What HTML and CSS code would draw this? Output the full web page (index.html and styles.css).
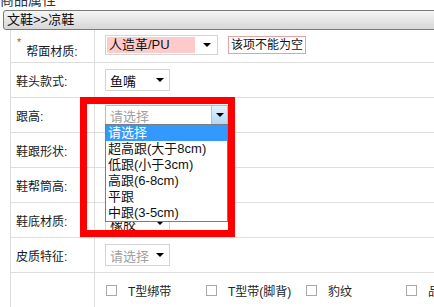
FILE: index.html
```html
<!DOCTYPE html>
<html>
  <head>
    <meta charset="utf-8">
    <title>商品属性</title>
    <link rel="stylesheet" href="styles.css">
  </head>
  <body>
    <div class="page-title">商品属性</div>
    <div class="cat-bar">文鞋&gt;&gt;凉鞋</div>

    <div class="attr-table">
      <div class="attr-row first">
        <div class="attr-label"><span class="req">*</span>帮面材质:</div>
        <div class="attr-value">
          <div class="fake-select error-select w113">
            <span class="sel-text">人造革/PU</span>
            <span class="sel-arrow"><i class="tri"></i></span>
          </div>
          <div class="error-tip">该项不能为空</div>
        </div>
      </div>

      <div class="attr-row">
        <div class="attr-label">鞋头款式:</div>
        <div class="attr-value">
          <div class="fake-select w65">
            <span class="sel-text">鱼嘴</span>
            <span class="sel-arrow"><i class="tri"></i></span>
          </div>
        </div>
      </div>

      <div class="attr-row">
        <div class="attr-label">跟高:</div>
        <div class="attr-value">
          <div class="fake-select open-select w123">
            <span class="sel-text placeholder">请选择</span>
            <span class="sel-button"><i class="tri"></i></span>
            <ul class="drop-list">
              <li class="active">请选择</li>
              <li>超高跟(大于8cm)</li>
              <li>低跟(小于3cm)</li>
              <li>高跟(6-8cm)</li>
              <li>平跟</li>
              <li>中跟(3-5cm)</li>
            </ul>
          </div>
        </div>
      </div>

      <div class="attr-row">
        <div class="attr-label">鞋跟形状:</div>
        <div class="attr-value"></div>
      </div>

      <div class="attr-row">
        <div class="attr-label">鞋帮筒高:</div>
        <div class="attr-value"></div>
      </div>

      <div class="attr-row">
        <div class="attr-label">鞋底材质:</div>
        <div class="attr-value">
          <div class="fake-select low-select w65">
            <span class="sel-text">橡胶</span>
            <span class="sel-arrow"><i class="tri"></i></span>
          </div>
        </div>
      </div>

      <div class="attr-row">
        <div class="attr-label">皮质特征:</div>
        <div class="attr-value">
          <div class="fake-select w65">
            <span class="sel-text placeholder">请选择</span>
            <span class="sel-arrow"><i class="tri"></i></span>
          </div>
        </div>
      </div>

      <div class="attr-row">
        <div class="attr-label"></div>
        <div class="attr-value checks">
          <label class="check-item"><span class="box"></span>T型绑带</label>
          <label class="check-item"><span class="box"></span>T型带(脚背)</label>
          <label class="check-item"><span class="box"></span>豹纹</label>
          <label class="check-item"><span class="box"></span>品牌</label>
        </div>
      </div>
    </div>

    <div class="mark-frame"></div>
  </body>
</html>
```

FILE: styles.css
```css
html, body {
  overflow: hidden;
}
body {
  margin: 0;
  padding: 0;
  width: 434px;
  height: 307px;
  background-color: #fff;
  color: #222;
  font-family: "Liberation Sans", "Noto Sans CJK SC", sans-serif;
  font-size: 12px;
}
.page-title {
  margin-top: -9px;
  height: 19px;
  line-height: 19px;
  font-size: 14px;
  color: #333;
  white-space: nowrap;
}
.cat-bar {
  margin-left: 3px;
  width: 520px;
  height: 18px;
  line-height: 18px;
  padding-left: 3px;
  font-size: 13px;
  color: #111;
  border: 1px solid #7a7a7a;
  border-radius: 3px 0 0 3px;
  background: linear-gradient(#f6f6f6, #d6d6d6);
  white-space: nowrap;
}
.attr-table {
  margin-left: 10px;
  width: 560px;
  border-left: 1px solid #ddd;
}
.attr-row {
  display: grid;
  grid-template-columns: 84px 1fr;
  height: 35px;
  box-sizing: border-box;
  border-bottom: 1px solid #ddd;
}
.attr-row.first {
  height: 33px;
}
.attr-label {
  display: flex;
  align-items: center;
  padding-left: 5px;
  border-right: 1px solid #ddd;
  font-size: 12px;
  color: #1a1a1a;
  white-space: nowrap;
}
.first .attr-label {
  padding-top: 8px;
}
.req {
  color: #e03c3c;
  font-size: 11px;
  line-height: 12px;
  margin: -2px 5px 0 1px;
  align-self: flex-start;
}
.attr-value {
  display: flex;
  align-items: center;
  padding-left: 10px;
}
.first .attr-value {
  align-items: flex-start;
  padding-top: 5px;
}

/* fake select boxes */
.fake-select {
  position: relative;
  display: flex;
  align-items: center;
  height: 22px;
  box-sizing: border-box;
  border: 1px solid #d4d4d4;
  background: #fff;
  font-size: 13px;
  white-space: nowrap;
}
.w65 { width: 65px; }
.w113 { width: 113px; }
.w123 { width: 123px; }
.sel-text {
  flex: 1;
  padding-left: 4px;
  color: #111;
}
.placeholder {
  color: #a0a0a0;
}
.sel-arrow {
  width: 18px;
  display: flex;
  justify-content: center;
}
.tri {
  width: 0;
  height: 0;
  border-left: 4px solid transparent;
  border-right: 4px solid transparent;
  border-top: 4px solid #000;
}
.error-select {
  height: 20px;
  padding-left: 1px;
}
.error-select .sel-text {
  flex: none;
  width: 86px;
  height: 16px;
  line-height: 16px;
  padding-left: 2px;
  background: #ffcaca;
}
.error-select .sel-arrow {
  margin-left: auto;
  width: 20px;
}
.error-tip {
  margin: 1px 0 0 10px;
  height: 16px;
  line-height: 16px;
  padding: 0 2px;
  border: 1px solid #e3a3a3;
  font-size: 12px;
  color: #111;
  white-space: nowrap;
}
.low-select {
  margin-top: 6px;
}

/* open dropdown */
.open-select {
  height: 20px;
  border-color: #b9bec6;
}
.open-select .sel-text {
  padding-left: 4px;
}
.sel-button {
  width: 15px;
  height: 18px;
  display: flex;
  align-items: center;
  justify-content: center;
  border-left: 1px solid #a9c4e0;
  background: linear-gradient(#e6f2fd, #b2d8f5);
}
.drop-list {
  position: absolute;
  left: -1px;
  top: 18px;
  width: 123px;
  box-sizing: border-box;
  margin: 0;
  padding: 0;
  list-style: none;
  border: 1px solid #7c7c7c;
  background: #fff;
  z-index: 2;
}
.drop-list li {
  height: 16px;
  line-height: 16px;
  padding-left: 2px;
  font-size: 13px;
  color: #111;
}
.drop-list li.active {
  background: #3399ff;
  color: #fff;
}

/* checkbox row */
.checks {
  padding-left: 11px;
}
.check-item {
  display: flex;
  align-items: center;
  width: 100px;
  flex: none;
  font-size: 12px;
  color: #222;
  white-space: nowrap;
}
.box {
  width: 11px;
  height: 11px;
  box-sizing: border-box;
  border: 1px solid #a8a8a8;
  margin-right: 11px;
}

/* red annotation frame */
.mark-frame {
  position: absolute;
  left: 80px;
  top: 97px;
  width: 155px;
  height: 140px;
  box-sizing: border-box;
  border: 7px solid #ff0000;
  z-index: 3;
}
```
